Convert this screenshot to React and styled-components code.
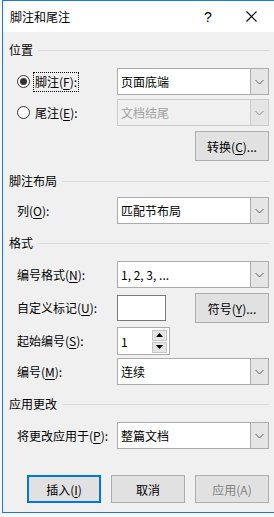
import React from "react";
import styled, { createGlobalStyle } from "styled-components";

const Global = createGlobalStyle`
  html, body { margin: 0; padding: 0; background: #f7f7f7; overflow: hidden; }
  body { font-family: "Noto Sans CJK SC", "Noto Sans", sans-serif; font-size: 12px; color: #000; }
  u { text-underline-offset: 2px; }
`;

const Frame = styled.div`
  margin-left: 2px;
  width: 271px;
  border: 1px solid #1a7ad4;
  background: #f0f0f0;
  display: flex;
  flex-direction: column;
`;

const TitleBar = styled.div`
  height: 31px;
  background: #fff;
  display: flex;
  align-items: center;
  padding-left: 7px;
`;

const Title = styled.div`
  flex: 1;
  font-size: 12px;
  line-height: 16px;
`;

const Help = styled.div`
  width: 30px;
  text-align: center;
  font-family: "Liberation Sans", sans-serif;
  font-size: 14px;
`;

const Close = styled.div`
  width: 46px;
  margin-left: 5px;
  display: flex;
  justify-content: center;
  align-items: center;
`;

const Body = styled.div`
  height: 480px;
  box-sizing: border-box;
  padding: 10px 5px 9px 6px;
  display: flex;
  flex-direction: column;
`;

const Section = styled.div`
  height: 16px;
  line-height: 16px;
  margin-top: ${(p) => p.$mt || 0}px;
  display: flex;
  align-items: center;
  &::after {
    content: "";
    flex: 1;
    height: 1px;
    background: #dadada;
    margin-left: 5px;
  }
`;

const Row = styled.div`
  display: grid;
  grid-template-columns: 108px 152px;
  align-items: center;
  margin-top: ${(p) => p.$mt || 0}px;
  height: ${(p) => p.$h || 27}px;
`;

const Label = styled.div`
  padding-left: 8px;
  display: flex;
  align-items: center;
  white-space: nowrap;
  line-height: 16px;
`;

const Radio = styled.span`
  width: 13px;
  height: 13px;
  box-sizing: border-box;
  border: 1px solid #333;
  border-radius: 50%;
  background: #fff;
  margin-right: 3px;
  display: flex;
  align-items: center;
  justify-content: center;
  &::after {
    content: "";
    display: ${(p) => (p.$checked ? "block" : "none")};
    width: 7px;
    height: 7px;
    border-radius: 50%;
    background: #333;
  }
`;

const Focus = styled.span`
  border: 1px dotted ${(p) => (p.$on ? "#000" : "transparent")};
  padding: 1px 1px;
`;

const Select = styled.div`
  height: 27px;
  box-sizing: border-box;
  border: 1px solid ${(p) => (p.$disabled ? "#cccccc" : "#acacac")};
  background: ${(p) => (p.$disabled ? "#f0f0f0" : "#fff")};
  color: ${(p) => (p.$disabled ? "#a0a0a0" : "#000")};
  display: flex;
  align-items: stretch;
`;

const SelectText = styled.div`
  flex: 1;
  padding-left: 3px;
  display: flex;
  align-items: center;
  white-space: nowrap;
`;

const Arrow = styled.div`
  width: 17px;
  background: #e5e5e5;
  border-left: 1px solid ${(p) => (p.$disabled ? "#cccccc" : "#acacac")};
  display: flex;
  align-items: center;
  justify-content: center;
`;

const Button = styled.div`
  width: ${(p) => p.$w || 74}px;
  height: ${(p) => p.$h || 28}px;
  box-sizing: border-box;
  background: #e1e1e1;
  border: ${(p) => (p.$default ? "2px solid #0078d7" : "1px solid #adadad")};
  color: ${(p) => (p.$disabled ? "#838383" : "#000")};
  display: flex;
  align-items: center;
  justify-content: center;
  white-space: nowrap;
`;

const RightBar = styled.div`
  display: flex;
  justify-content: flex-end;
  gap: 10px;
  margin-top: ${(p) => p.$mt || 0}px;
`;

const Cell = styled.div`
  display: flex;
  align-items: center;
  justify-content: space-between;
`;

const TextBox = styled.div`
  width: 49px;
  height: 26px;
  box-sizing: border-box;
  border: 1px solid #7a7a7a;
  background: #fff;
`;

const Spinner = styled.div`
  width: 53px;
  height: 28px;
  box-sizing: border-box;
  border: 1px solid #acacac;
  background: #fff;
  display: flex;
  align-items: center;
  padding: 1px 2px 1px 3px;
`;

const SpinValue = styled.div`
  flex: 1;
`;

const SpinButtons = styled.div`
  width: 15px;
  height: 23px;
  display: flex;
  flex-direction: column;
  gap: 1px;
`;

const SpinBtn = styled.div`
  flex: 1;
  background: #e5e5e5;
  border: 1px solid #c4c4c4;
  display: flex;
  align-items: center;
  justify-content: center;
`;

const Chevron = ({ color = "#606060" }) => (
  <svg width="9" height="6" viewBox="0 0 9 6">
    <polyline points="0.5,1 4.5,5 8.5,1" fill="none" stroke={color} strokeWidth="1" />
  </svg>
);

const Dropdown = ({ children, disabled }) => (
  <Select $disabled={disabled}>
    <SelectText>{children}</SelectText>
    <Arrow $disabled={disabled}>
      <Chevron color={disabled ? "#8a8a8a" : "#606060"} />
    </Arrow>
  </Select>
);

export default function App() {
  return (
    <>
      <Global />
      <Frame>
        <TitleBar>
          <Title>脚注和尾注</Title>
          <Help>?</Help>
          <Close>
            <svg width="11" height="11" viewBox="0 0 11 11">
              <path d="M0.5 0.5 L10.5 10.5 M10.5 0.5 L0.5 10.5" stroke="#000" strokeWidth="1.1" />
            </svg>
          </Close>
        </TitleBar>
        <Body>
          <Section>位置</Section>
          <Row $mt={10}>
            <Label>
              <Radio $checked />
              <Focus $on>
                脚注(<u>F</u>):
              </Focus>
            </Label>
            <Dropdown>页面底端</Dropdown>
          </Row>
          <Row $mt={4}>
            <Label>
              <Radio />
              <Focus>
                尾注(<u>E</u>):
              </Focus>
            </Label>
            <Dropdown disabled>文档结尾</Dropdown>
          </Row>
          <RightBar $mt={5}>
            <Button $h={30}>
              转换(<u>C</u>)...
            </Button>
          </RightBar>

          <Section $mt={12}>脚注布局</Section>
          <Row $mt={8}>
            <Label>
              列(<u>O</u>):
            </Label>
            <Dropdown>匹配节布局</Dropdown>
          </Row>

          <Section $mt={11}>格式</Section>
          <Row $mt={10}>
            <Label>
              编号格式(<u>N</u>):
            </Label>
            <Dropdown>1, 2, 3, ...</Dropdown>
          </Row>
          <Row $mt={5} $h={30}>
            <Label>
              自定义标记(<u>U</u>):
            </Label>
            <Cell>
              <TextBox />
              <Button $h={30}>
                符号(<u>Y</u>)...
              </Button>
            </Cell>
          </Row>
          <Row $mt={4} $h={28}>
            <Label>
              起始编号(<u>S</u>):
            </Label>
            <Cell>
              <Spinner>
                <SpinValue>1</SpinValue>
                <SpinButtons>
                  <SpinBtn>
                    <svg width="7" height="4" viewBox="0 0 7 4">
                      <polygon points="0,4 7,4 3.5,0" fill="#000" />
                    </svg>
                  </SpinBtn>
                  <SpinBtn>
                    <svg width="7" height="4" viewBox="0 0 7 4">
                      <polygon points="0,0 7,0 3.5,4" fill="#000" />
                    </svg>
                  </SpinBtn>
                </SpinButtons>
              </Spinner>
            </Cell>
          </Row>
          <Row $mt={3}>
            <Label>
              编号(<u>M</u>):
            </Label>
            <Dropdown>连续</Dropdown>
          </Row>

          <Section $mt={11}>应用更改</Section>
          <Row $mt={10}>
            <Label>
              将更改应用于(<u>P</u>):
            </Label>
            <Dropdown>整篇文档</Dropdown>
          </Row>

          <RightBar $mt={26}>
            <Button $default>
              插入(<u>I</u>)
            </Button>
            <Button>取消</Button>
            <Button $disabled>应用(A)</Button>
          </RightBar>
        </Body>
      </Frame>
    </>
  );
}
